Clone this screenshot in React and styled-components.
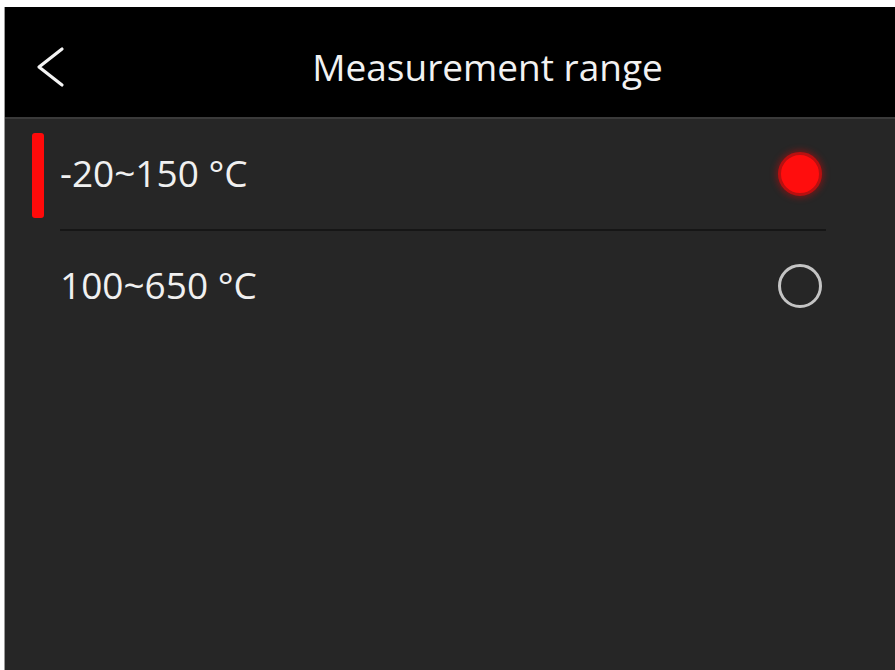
import * as React from "react"
import styled, { createGlobalStyle } from "styled-components"

const Global = createGlobalStyle`
	html, body {
		margin: 0;
		padding: 0;
		background: #ffffff;
	}
	body {
		font-family: "Open Sans", "Noto Sans", sans-serif;
	}
`

const Screen = styled.div`
	margin: 7px 0 0 4px;
	height: 663px;
	background-color: #262626;
	border-left: 1px solid #9a9a9a;
	display: flex;
	flex-direction: column;
`

const Header = styled.header`
	box-sizing: border-box;
	height: 112px;
	padding-top: 10px;
	background-color: #000000;
	border-bottom: 2px solid #3a3a3a;
	display: flex;
	align-items: center;
`

const BackButton = styled.button`
	width: 75px;
	height: 100%;
	padding: 0 0 0 31px;
	margin: 0;
	border: none;
	background: transparent;
	display: flex;
	align-items: center;
	cursor: pointer;
	svg {
		display: block;
	}
`

const Title = styled.h1`
	flex: 1;
	margin: 0;
	text-align: center;
	color: #f2f2f2;
	font-size: 37px;
	font-weight: 400;
	padding-bottom: 2px;
`

const List = styled.ul`
	list-style: none;
	margin: 0;
	padding: 0;
`

const Row = styled.li`
	display: flex;
	align-items: center;
	padding-left: 27px;
	cursor: pointer;
`

const Indicator = styled.span`
	width: 12px;
	height: 85px;
	margin-right: 16px;
	border-radius: 3px;
	background-color: ${(p) => (p.$on ? "#ff0a0a" : "transparent")};
`

const RowBody = styled.div`
	flex: 1;
	height: 110px;
	margin-right: 69px;
	padding-right: 4px;
	display: flex;
	align-items: center;
	justify-content: space-between;
	border-bottom: 2px solid ${(p) => (p.$last ? "transparent" : "#161616")};
`

const Label = styled.span`
	color: #f0f0f0;
	font-size: 37px;
	padding-bottom: 4px;
`

const Radio = styled.span`
	box-sizing: border-box;
	width: 44px;
	height: 44px;
	border-radius: 50%;
	border: 3px solid ${(p) => (p.$on ? "#b81010" : "#c4c4c4")};
	background-color: ${(p) => (p.$on ? "#ff0d0d" : "transparent")};
	box-shadow: ${(p) => (p.$on ? "0 0 6px 2px rgba(255, 0, 0, 0.35)" : "none")};
`

const ranges = ["-20~150 °C", "100~650 °C"]

export default function App() {
	const [selected, setSelected] = React.useState(0)

	return (
		<>
			<Global />
			<Screen>
				<Header>
					<BackButton aria-label="Back">
						<svg width="30" height="42" viewBox="0 0 30 42">
							<polyline
								points="26,3 3,21 26,39"
								fill="none"
								stroke="#f4f4f4"
								strokeWidth="3.2"
								strokeLinecap="round"
								strokeLinejoin="round"
							/>
						</svg>
					</BackButton>
					<Title>Measurement range</Title>
				</Header>
				<List>
					{ranges.map((r, i) => (
						<Row key={r} onClick={() => setSelected(i)}>
							<Indicator $on={selected === i} />
							<RowBody $last={i === ranges.length - 1}>
								<Label>{r}</Label>
								<Radio $on={selected === i} />
							</RowBody>
						</Row>
					))}
				</List>
			</Screen>
		</>
	)
}
